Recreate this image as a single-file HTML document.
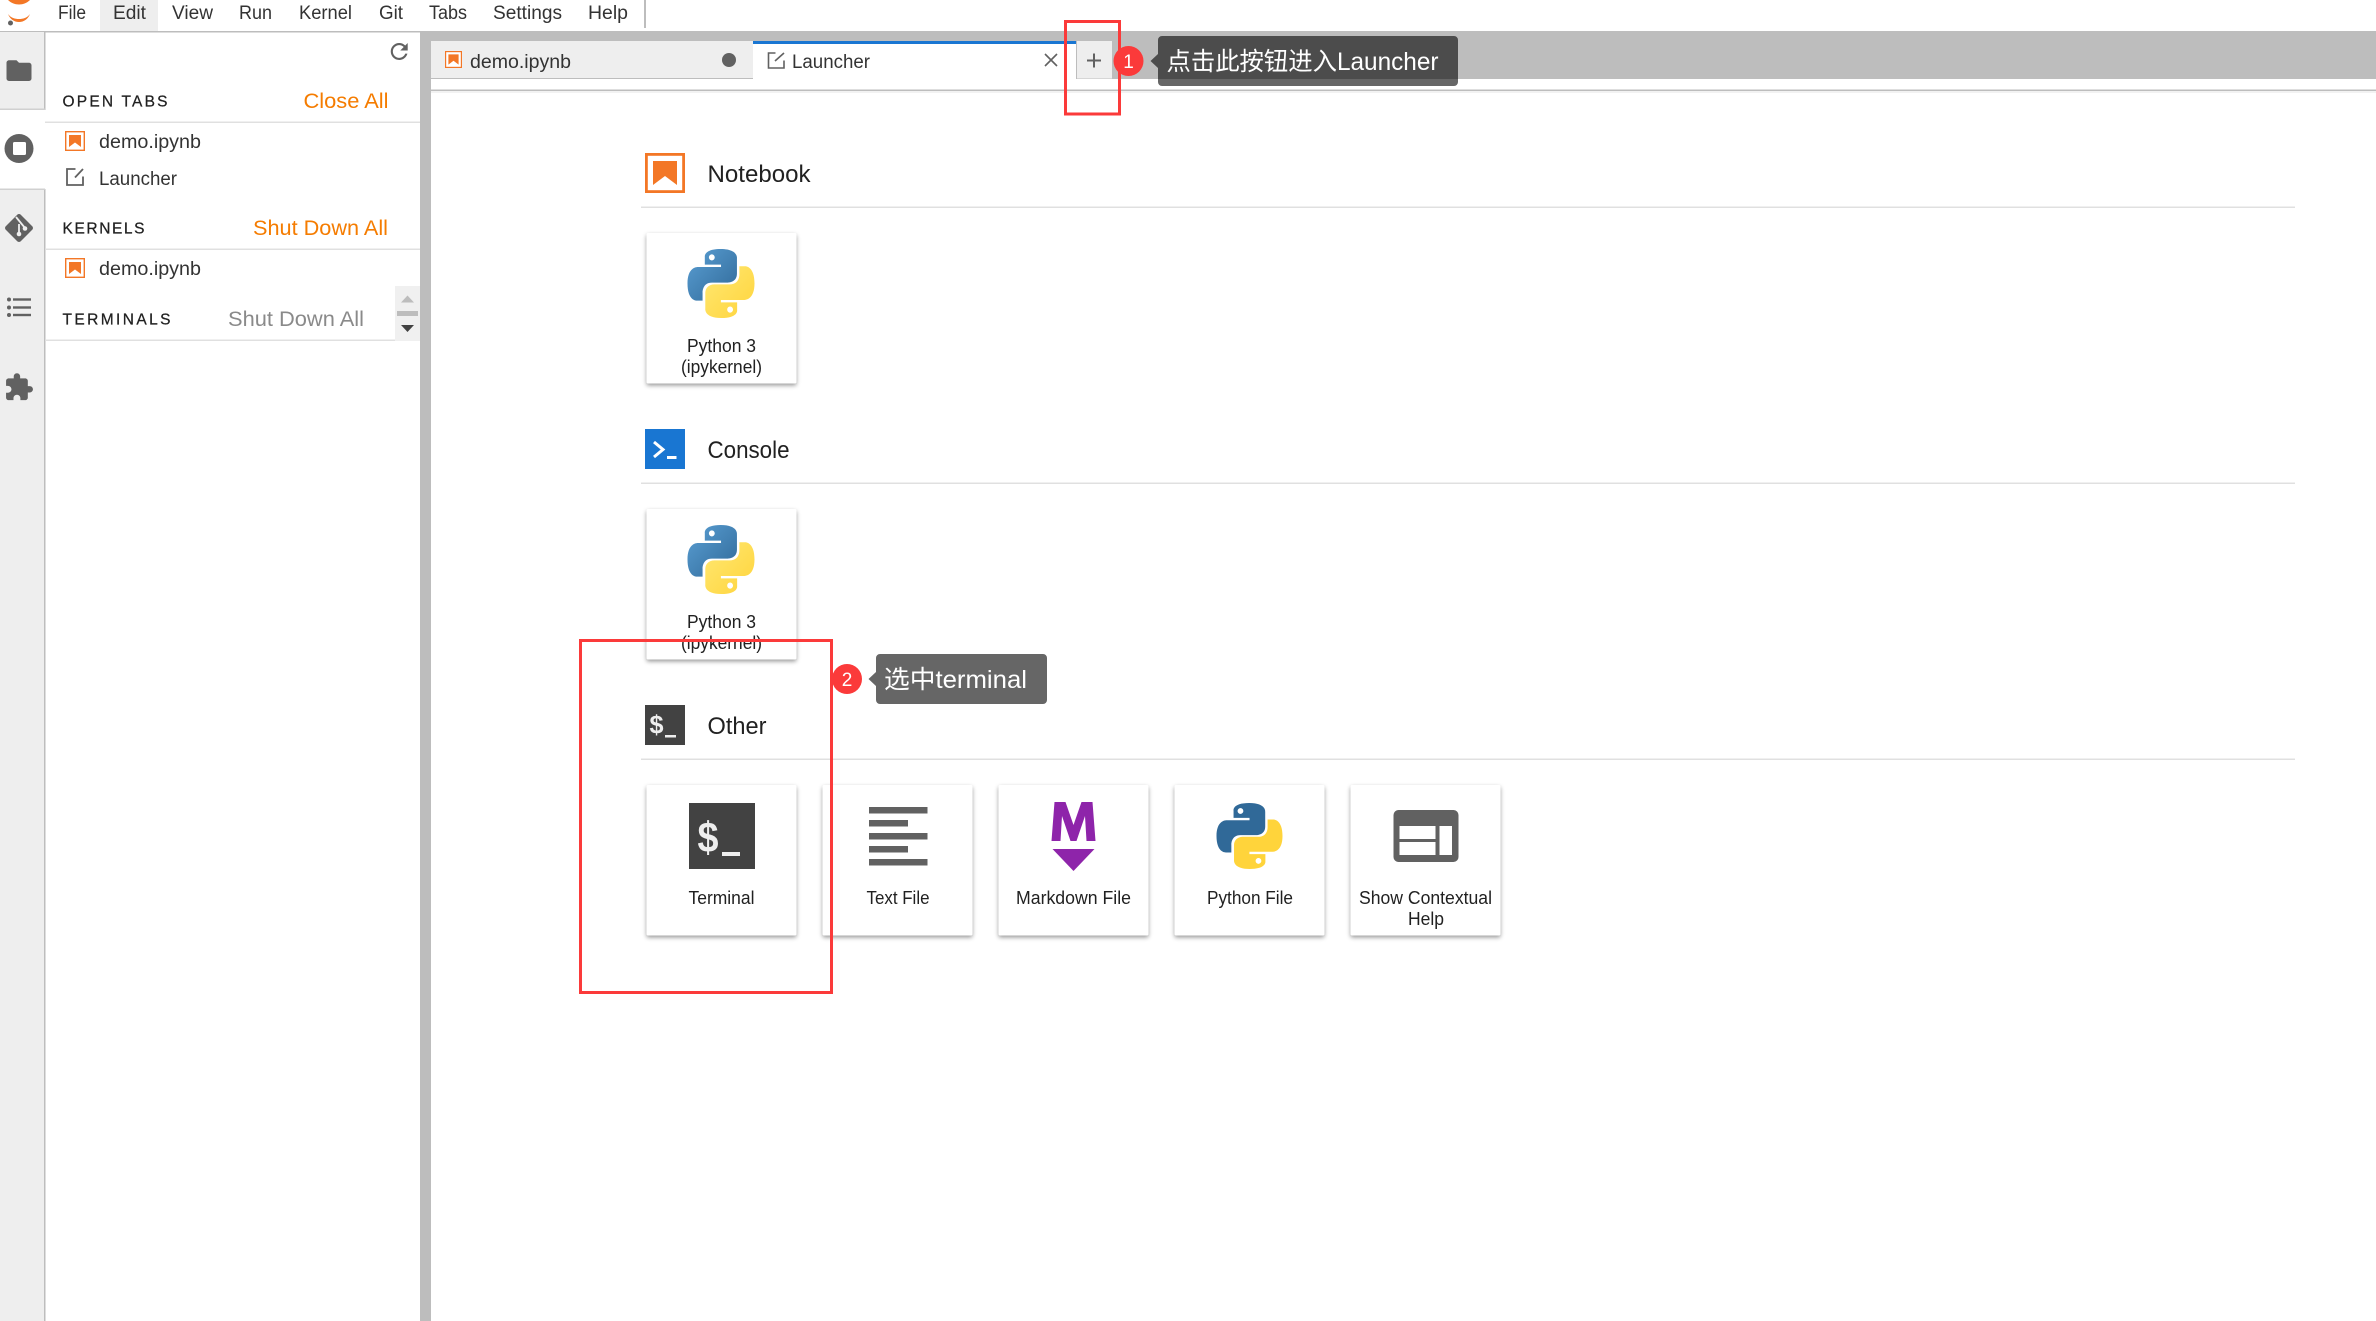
<!DOCTYPE html>
<html lang="zh">
<head>
<meta charset="utf-8">
<title>JupyterLab Launcher</title>
<style>
html,body{margin:0;padding:0;background:#fff;width:2376px;height:1321px;overflow:hidden}
svg{display:block}
text{font-family:"Liberation Sans","Noto Sans CJK SC",sans-serif;fill:#212121}
.m{font-size:19px;fill:#333}
.s{font-size:19px;fill:#333}
.h{font-size:15.500px;fill:#212121;stroke:#212121;stroke-width:.25}
.a{font-size:21px;fill:#f57c00}
.g{font-size:21px;fill:#8a8a8a}
.t{font-size:24px;fill:#212121}
.l{font-size:18px;fill:#212121}
.w{font-size:25px;fill:#fff}
</style>
</head>
<body>
<svg xmlns="http://www.w3.org/2000/svg" width="2376" height="1321" viewBox="0 0 2376 1321">
<defs>
<linearGradient id="pb" x1="0" y1="0" x2="1" y2="1"><stop offset="0" stop-color="#5A9FD4"/><stop offset="1" stop-color="#306998"/></linearGradient>
<linearGradient id="py" x1="0" y1="0" x2="1" y2="1"><stop offset="0" stop-color="#FFE873"/><stop offset="1" stop-color="#FFD43B"/></linearGradient>
<filter id="sh" x="-10%" y="-10%" width="120%" height="125%"><feDropShadow dx="0" dy="2" stdDeviation="2" flood-color="#000" flood-opacity=".4"/></filter>
<symbol id="nb" viewBox="0 0 40 40"><rect x="1.400" y="1.400" width="37.200" height="37.200" fill="#fff" stroke="#f37726" stroke-width="2.800"/><path d="M8 8H32V32L20 23 8 32Z" fill="#f37726"/></symbol>
<symbol id="pyg" viewBox="0 0 110.700 109.600" preserveAspectRatio="none"><path fill="url(#pb)" d="M54.900 0C26.800 0 28.600 12.200 28.600 12.200l0 12.600h26.800v3.800H17.900S0 26.500 0 54.800c0 28.300 15.600 27.300 15.600 27.300h9.300V69s-.5-15.600 15.400-15.600h26.500s14.900.2 14.900-14.400V14.800S84 0 54.900 0zM40.200 8.500c2.700 0 4.800 2.200 4.800 4.800s-2.200 4.800-4.800 4.800-4.800-2.200-4.800-4.800 2.200-4.800 4.800-4.800z"/><path fill="url(#py)" d="M55.700 109.600c28.100 0 26.300-12.200 26.300-12.200V84.800H55.200V81h37.500s18 2 18-26.300c0-28.300-15.700-27.300-15.700-27.300h-9.300v13.100s.5 15.600-15.400 15.600H44.300s-14.900-.2-14.900 14.400v24.200s-2.300 14.900 26.300 14.900zM70.400 101c-2.700 0-4.800-2.200-4.800-4.800s2.200-4.800 4.800-4.800 4.800 2.200 4.800 4.800-2.200 4.800-4.800 4.800z"/></symbol>
</defs>

<!-- menu bar -->
<rect x="0" y="0" width="2376" height="31" fill="#fff"/>
<rect x="100" y="0" width="58" height="31" fill="#eeeeee"/>
<path d="M8 0C11 3 15 4.500 19 4.500S27 3 30 0C28 0 10 0 8 0Z" fill="#f37726"/>
<path d="M8 14C11 18 15 19 19 19S27 18 30 14C28 19 24 22 19 22S10 19 8 14Z" fill="#f37726"/>
<circle cx="10.500" cy="23" r="2.500" fill="#616161"/>
<text class="m" x="58" y="19" textLength="28" lengthAdjust="spacingAndGlyphs">File</text>
<text class="m" x="113" y="19" textLength="33" lengthAdjust="spacingAndGlyphs">Edit</text>
<text class="m" x="172" y="19" textLength="41" lengthAdjust="spacingAndGlyphs">View</text>
<text class="m" x="239" y="19" textLength="33" lengthAdjust="spacingAndGlyphs">Run</text>
<text class="m" x="299" y="19" textLength="53" lengthAdjust="spacingAndGlyphs">Kernel</text>
<text class="m" x="379" y="19" textLength="24" lengthAdjust="spacingAndGlyphs">Git</text>
<text class="m" x="429" y="19" textLength="38" lengthAdjust="spacingAndGlyphs">Tabs</text>
<text class="m" x="493" y="19" textLength="69" lengthAdjust="spacingAndGlyphs">Settings</text>
<text class="m" x="588" y="19" textLength="40" lengthAdjust="spacingAndGlyphs">Help</text>
<rect x="644" y="0" width="2" height="28" fill="#bdbdbd"/>
<rect x="0" y="31" width="2376" height="1.500" fill="#bdbdbd"/>

<!-- left icon bar -->
<rect x="0" y="32" width="44" height="1289" fill="#eeeeee"/>
<rect x="44" y="32" width="1.500" height="1289" fill="#bdbdbd"/>
<rect x="0" y="110" width="46" height="79" fill="#fff"/>
<rect x="0" y="108.500" width="45" height="1.500" fill="#d0d0d0"/>
<rect x="0" y="188.500" width="45" height="1.500" fill="#d0d0d0"/>
<path transform="translate(4 55) scale(1.25 1.3)" fill="#616161" d="M10 4H4c-1.100 0-2 .9-2 2v12c0 1.100.9 2 2 2h16c1.100 0 2-.9 2-2V8c0-1.100-.9-2-2-2h-8l-2-2z"/>
<circle cx="19" cy="148.500" r="14.500" fill="#616161"/>
<rect x="13" y="142" width="13" height="13" rx="1.500" fill="#fff"/>
<rect x="8.400" y="217.400" width="21.200" height="21.200" rx="2.500" transform="rotate(45 19 228)" fill="#616161"/>
<path d="M16 217L25 228M19 224V234" stroke="#eee" stroke-width="1.800" fill="none"/>
<circle cx="25" cy="228.500" r="2.300" fill="#eee"/><circle cx="19" cy="234" r="2.300" fill="#eee"/>
<g fill="#616161">
<circle cx="9" cy="299.500" r="2"/><circle cx="9" cy="307.500" r="2"/><circle cx="9" cy="315" r="2"/>
<rect x="13" y="298.300" width="18" height="2.400"/><rect x="13" y="306.300" width="18" height="2.400"/><rect x="13" y="313.800" width="18" height="2.400"/>
</g>
<path transform="translate(3.500 372) scale(1.28 1.28)" fill="#616161" d="M20.500 11H19V7c0-1.100-.9-2-2-2h-4V3.500C13 2.120 11.880 1 10.500 1S8 2.120 8 3.500V5H4c-1.100 0-1.990.9-1.990 2v3.800H3.500c1.490 0 2.700 1.210 2.700 2.700s-1.210 2.700-2.700 2.700H2V20c0 1.100.9 2 2 2h3.800v-1.500c0-1.490 1.210-2.700 2.700-2.700 1.490 0 2.700 1.210 2.700 2.700V22H17c1.100 0 2-.9 2-2v-4h1.500c1.380 0 2.500-1.120 2.500-2.500S21.880 11 20.500 11z"/>

<!-- sidebar panel -->
<rect x="420" y="32" width="11" height="1289" fill="#bdbdbd"/>
<path transform="translate(386.500 38.800) scale(1.06)" fill="#616161" d="M17.650 6.350C16.200 4.900 14.210 4 12 4c-4.420 0-7.990 3.580-7.990 8s3.570 8 7.990 8c3.730 0 6.840-2.550 7.730-6h-2.080c-.82 2.330-3.040 4-5.650 4-3.310 0-6-2.690-6-6s2.690-6 6-6c1.660 0 3.140.69 4.220 1.780L13 11h7V4l-2.350 2.350z"/>
<text class="h" x="62.500" y="106.500" textLength="105" lengthAdjust="spacing">OPEN TABS</text>
<text class="a" x="303.500" y="108" textLength="85" lengthAdjust="spacingAndGlyphs">Close All</text>
<rect x="45" y="121.500" width="375" height="1.500" fill="#e0e0e0"/>
<use href="#nb" x="65" y="131" width="20" height="20"/>
<text class="s" x="99" y="148" textLength="102" lengthAdjust="spacingAndGlyphs">demo.ipynb</text>
<path d="M75.500 169H67V185H83V176.500M75 177.500L83 169" fill="none" stroke="#616161" stroke-width="1.800"/>
<text class="s" x="99" y="185" textLength="78" lengthAdjust="spacingAndGlyphs">Launcher</text>
<text class="h" x="62.500" y="233.500" textLength="82" lengthAdjust="spacing">KERNELS</text>
<text class="a" x="253" y="235" textLength="135" lengthAdjust="spacingAndGlyphs">Shut Down All</text>
<rect x="45" y="248.500" width="375" height="1.500" fill="#e0e0e0"/>
<use href="#nb" x="65" y="258" width="20" height="20"/>
<text class="s" x="99" y="275" textLength="102" lengthAdjust="spacingAndGlyphs">demo.ipynb</text>
<text class="h" x="62.500" y="324.500" textLength="108" lengthAdjust="spacing">TERMINALS</text>
<text class="g" x="228" y="326" textLength="136" lengthAdjust="spacingAndGlyphs">Shut Down All</text>
<rect x="45" y="339.500" width="350" height="1.500" fill="#e0e0e0"/>
<rect x="395" y="286" width="25" height="55" fill="#f0f0f0"/>
<path d="M401 302.500L407.500 295.500 414 302.500Z" fill="#bdbdbd"/>
<rect x="397" y="311" width="21" height="5" fill="#bdbdbd"/>
<path d="M401 325H414L407.500 332Z" fill="#424242"/>

<!-- tab bar -->
<rect x="431" y="32" width="1945" height="47" fill="#bdbdbd"/>
<rect x="431" y="41" width="322" height="37" fill="#eeeeee"/>
<use href="#nb" x="445" y="51" width="17" height="17"/>
<text class="s" x="470" y="68" textLength="101" lengthAdjust="spacingAndGlyphs">demo.ipynb</text>
<circle cx="729" cy="60" r="7" fill="#616161"/>
<rect x="753" y="41" width="323" height="39" fill="#fff"/>
<rect x="753" y="41" width="323" height="3" fill="#1976d2"/>
<path d="M775.500 53H768.500V68H784V60.500M775 61L784 53" fill="none" stroke="#616161" stroke-width="1.600"/>
<text class="s" x="792" y="68" textLength="78" lengthAdjust="spacingAndGlyphs">Launcher</text>
<path d="M1045 54L1057 66M1057 54L1045 66" stroke="#616161" stroke-width="1.600" fill="none"/>
<rect x="1076" y="41" width="36" height="37.500" fill="#eeeeee"/>
<rect x="1076" y="41" width="1" height="38" fill="#bdbdbd"/>
<path d="M1087 60.500H1101M1094 53.500V67.500" stroke="#616161" stroke-width="2" fill="none"/>
<rect x="431" y="79" width="1945" height="11" fill="#fff"/>
<rect x="431" y="89.500" width="1945" height="1.500" fill="#bdbdbd"/>
<rect x="431" y="91" width="1945" height="2" fill="#f2f2f2"/>

<!-- Notebook section -->
<use href="#nb" x="645" y="153" width="40" height="40"/>
<text class="t" x="707.500" y="182" textLength="103" lengthAdjust="spacingAndGlyphs">Notebook</text>
<rect x="641" y="206.500" width="1654" height="1.500" fill="#e0e0e0"/>
<rect x="646.500" y="233" width="150" height="150.500" rx="2" fill="#fff" filter="url(#sh)"/>
<use href="#pyg" x="687.500" y="249" width="67" height="69"/>
<text class="l" x="687" y="352" textLength="69" lengthAdjust="spacingAndGlyphs">Python 3</text>
<text class="l" x="681" y="373" textLength="81" lengthAdjust="spacingAndGlyphs">(ipykernel)</text>

<!-- Console section -->
<rect x="645" y="429" width="40" height="40" fill="#1976d2"/>
<path d="M654 442L663 449.500 654 457" fill="none" stroke="#fff" stroke-width="3"/>
<rect x="667" y="456" width="9.500" height="3" fill="#fff"/>
<text class="t" x="707.500" y="458" textLength="82" lengthAdjust="spacingAndGlyphs">Console</text>
<rect x="641" y="482.500" width="1654" height="1.500" fill="#e0e0e0"/>
<rect x="646.500" y="509" width="150" height="150.500" rx="2" fill="#fff" filter="url(#sh)"/>
<use href="#pyg" x="687.500" y="525" width="67" height="69"/>
<text class="l" x="687" y="628" textLength="69" lengthAdjust="spacingAndGlyphs">Python 3</text>
<text class="l" x="681" y="649" textLength="81" lengthAdjust="spacingAndGlyphs">(ipykernel)</text>

<!-- Other section -->
<rect x="645" y="705" width="40" height="40" fill="#424242"/>
<text x="649.500" y="733.500" textLength="14" lengthAdjust="spacingAndGlyphs" style="font-size:26px;font-weight:bold;fill:#eeeeee">$</text>
<rect x="665" y="735" width="11" height="2.500" fill="#eeeeee"/>
<text class="t" x="707.500" y="734" textLength="59" lengthAdjust="spacingAndGlyphs">Other</text>
<rect x="641" y="758.500" width="1654" height="1.500" fill="#e0e0e0"/>

<rect x="646.500" y="785" width="150" height="150.500" rx="2" fill="#fff" filter="url(#sh)"/>
<rect x="689" y="803" width="66" height="66" fill="#424242"/>
<text x="697.500" y="852" textLength="21" lengthAdjust="spacingAndGlyphs" style="font-size:43px;font-weight:bold;fill:#eeeeee">$</text>
<rect x="722" y="852" width="18" height="4" fill="#eeeeee"/>
<text class="l" x="688.500" y="904" textLength="66" lengthAdjust="spacingAndGlyphs">Terminal</text>

<rect x="822.500" y="785" width="150" height="150.500" rx="2" fill="#fff" filter="url(#sh)"/>
<g fill="#616161">
<rect x="869" y="807" width="58.500" height="6.500"/>
<rect x="869" y="820" width="39" height="6.500"/>
<rect x="869" y="833" width="58.500" height="6.500"/>
<rect x="869" y="846" width="39" height="6.500"/>
<rect x="869" y="859" width="58.500" height="6.500"/>
</g>
<text class="l" x="866.500" y="904" textLength="63" lengthAdjust="spacingAndGlyphs">Text File</text>

<rect x="998.500" y="785" width="150" height="150.500" rx="2" fill="#fff" filter="url(#sh)"/>
<path d="M1051.500 841L1054.500 802H1065.500L1073.500 825 1081.500 802H1092.500L1095.500 841H1086.500L1085 816 1076.500 841H1070.500L1062 816 1060.500 841Z" fill="#8e24aa"/>
<path d="M1052.500 849H1094.500L1073.500 871Z" fill="#8e24aa"/>
<text class="l" x="1016" y="904" textLength="115" lengthAdjust="spacingAndGlyphs">Markdown File</text>

<rect x="1174.500" y="785" width="150" height="150.500" rx="2" fill="#fff" filter="url(#sh)"/>
<svg x="1216.500" y="803" width="66" height="66" viewBox="0 0 110.700 109.600" preserveAspectRatio="none"><path fill="#306998" d="M54.900 0C26.800 0 28.600 12.200 28.600 12.200l0 12.600h26.800v3.800H17.900S0 26.500 0 54.800c0 28.300 15.600 27.300 15.600 27.300h9.300V69s-.5-15.600 15.400-15.600h26.500s14.900.2 14.900-14.400V14.800S84 0 54.900 0zM40.200 8.500c2.700 0 4.800 2.200 4.800 4.800s-2.200 4.800-4.800 4.800-4.800-2.200-4.800-4.800 2.200-4.800 4.800-4.800z"/><path fill="#FFD43B" d="M55.700 109.600c28.100 0 26.300-12.200 26.300-12.200V84.800H55.200V81h37.500s18 2 18-26.300c0-28.300-15.700-27.300-15.700-27.300h-9.300v13.100s.5 15.600-15.400 15.600H44.300s-14.900-.2-14.900 14.400v24.200s-2.300 14.900 26.300 14.900zM70.400 101c-2.700 0-4.800-2.200-4.800-4.800s2.200-4.800 4.800-4.800 4.800 2.200 4.800 4.800-2.200 4.800-4.800 4.800z"/></svg>
<text class="l" x="1207" y="904" textLength="86" lengthAdjust="spacingAndGlyphs">Python File</text>

<rect x="1350.500" y="785" width="150" height="150.500" rx="2" fill="#fff" filter="url(#sh)"/>
<rect x="1393.500" y="810" width="65" height="52" rx="5" fill="#616161"/>
<rect x="1399.500" y="826" width="36" height="13" fill="#fff"/>
<rect x="1399.500" y="842" width="36" height="13" fill="#fff"/>
<rect x="1439.500" y="826" width="12.500" height="29" fill="#fff"/>
<text class="l" x="1359" y="904" textLength="133" lengthAdjust="spacingAndGlyphs">Show Contextual</text>
<text class="l" x="1408" y="925" textLength="36" lengthAdjust="spacingAndGlyphs">Help</text>

<!-- annotations -->
<rect x="1065.500" y="21.500" width="54" height="92.500" fill="none" stroke="#fb3a3a" stroke-width="3"/>
<circle cx="1128.500" cy="61" r="15" fill="#fb3a3a"/>
<text x="1128.500" y="68" text-anchor="middle" style="font-size:19px;fill:#fff">1</text>
<path d="M1150.500 61L1158 54V68Z M1158 40a4 4 0 0 1 4-4H1454a4 4 0 0 1 4 4V82a4 4 0 0 1-4 4H1162a4 4 0 0 1-4-4Z" fill="#000" fill-opacity=".6"/>
<text class="w" x="1166.500" y="70" textLength="272" lengthAdjust="spacingAndGlyphs">点击此按钮进入Launcher</text>

<rect x="580.500" y="640.500" width="251" height="352" fill="none" stroke="#fb3a3a" stroke-width="3"/>
<circle cx="847" cy="679" r="15" fill="#fb3a3a"/>
<text x="847" y="686" text-anchor="middle" style="font-size:19px;fill:#fff">2</text>
<path d="M868.500 679L876 672V686Z M876 658a4 4 0 0 1 4-4H1043a4 4 0 0 1 4 4V700a4 4 0 0 1-4 4H880a4 4 0 0 1-4-4Z" fill="#666666"/>
<text class="w" x="884" y="688" textLength="143" lengthAdjust="spacingAndGlyphs">选中terminal</text>
</svg>
</body>
</html>
